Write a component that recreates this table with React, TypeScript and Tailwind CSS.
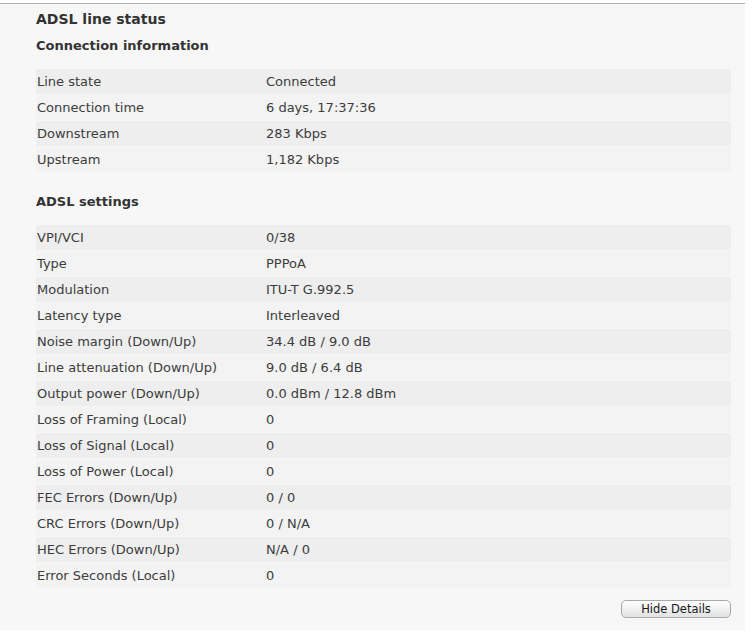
import React from "react";

const connection: [string, string][] = [
  ["Line state", "Connected"],
  ["Connection time", "6 days, 17:37:36"],
  ["Downstream", "283 Kbps"],
  ["Upstream", "1,182 Kbps"],
];

const settings: [string, string][] = [
  ["VPI/VCI", "0/38"],
  ["Type", "PPPoA"],
  ["Modulation", "ITU-T G.992.5"],
  ["Latency type", "Interleaved"],
  ["Noise margin (Down/Up)", "34.4 dB / 9.0 dB"],
  ["Line attenuation (Down/Up)", "9.0 dB / 6.4 dB"],
  ["Output power (Down/Up)", "0.0 dBm / 12.8 dBm"],
  ["Loss of Framing (Local)", "0"],
  ["Loss of Signal (Local)", "0"],
  ["Loss of Power (Local)", "0"],
  ["FEC Errors (Down/Up)", "0 / 0"],
  ["CRC Errors (Down/Up)", "0 / N/A"],
  ["HEC Errors (Down/Up)", "N/A / 0"],
  ["Error Seconds (Local)", "0"],
];

const Rows = ({ rows }: { rows: [string, string][] }) => (
  <div className="flex flex-col gap-px">
    {rows.map(([label, value], i) => (
      <div
        key={label}
        className={`flex h-[25px] items-center text-[13px] text-[#3c3c3c] ${
          i % 2 === 0 ? "bg-[#eeeeee]" : "bg-[#f3f3f3]"
        }`}
      >
        <div className="w-[230px] pl-px">{label}</div>
        <div>{value}</div>
      </div>
    ))}
  </div>
);

export default function App() {
  return (
    <div className="bg-white h-[640px] pt-[3px] font-['DejaVu_Sans',Verdana,sans-serif]">
      <div className="w-[745px] border-t border-[#b0b0b0] bg-[#f7f7f7] pl-[36px] pr-[14px] pt-[5px] pb-[12px]">
        <h1 className="text-[14px] leading-[20px] font-bold text-[#333]">
          ADSL line status
        </h1>
        <h2 className="mt-[8px] text-[13px] leading-[18px] font-bold text-[#333]">
          Connection information
        </h2>
        <div className="mt-[14px]">
          <Rows rows={connection} />
        </div>
        <h2 className="mt-[21px] text-[13px] leading-[18px] font-bold text-[#333]">
          ADSL settings
        </h2>
        <div className="mt-[14px]">
          <Rows rows={settings} />
        </div>
        <div className="mt-[12px] flex justify-end">
          <button className="w-[110px] h-[18px] rounded-[5px] border border-[#a8a8a8] bg-gradient-to-b from-white to-[#e2e2e2] text-[11.5px] leading-[16px] text-[#1a1a1a]">
            Hide Details
          </button>
        </div>
      </div>
    </div>
  );
}
